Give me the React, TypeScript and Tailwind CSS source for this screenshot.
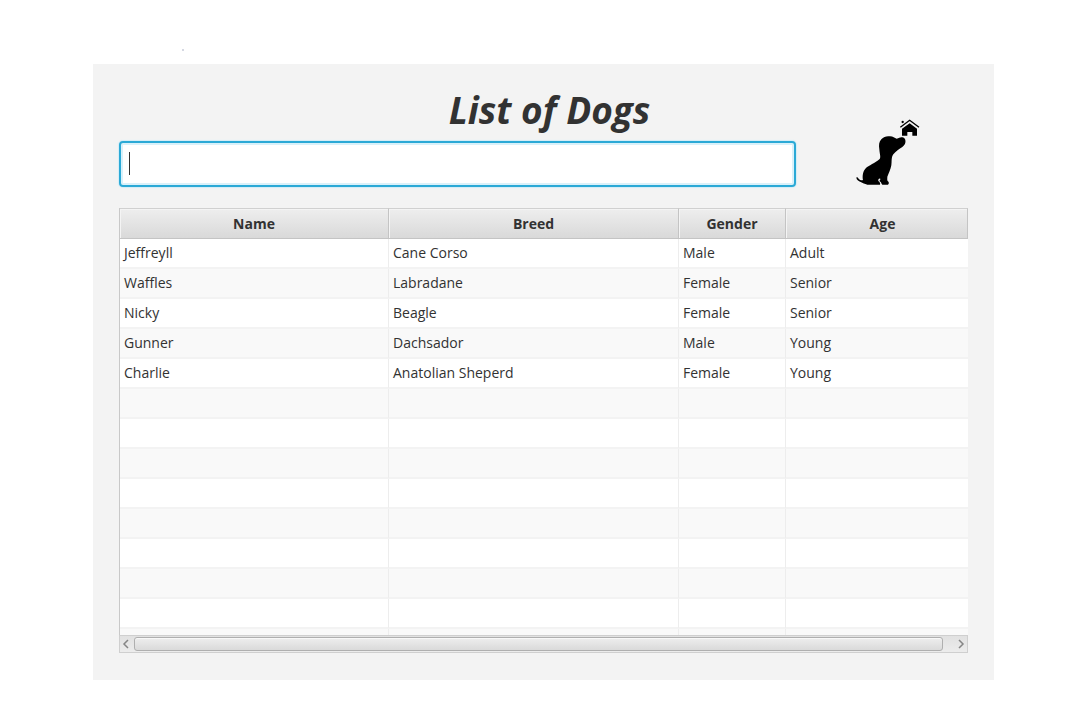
import React from "react";

type Dog = { name: string; breed: string; gender: string; age: string };

const dogs: Dog[] = [
  { name: "Jeffreyll", breed: "Cane Corso", gender: "Male", age: "Adult" },
  { name: "Waffles", breed: "Labradane", gender: "Female", age: "Senior" },
  { name: "Nicky", breed: "Beagle", gender: "Female", age: "Senior" },
  { name: "Gunner", breed: "Dachsador", gender: "Male", age: "Young" },
  { name: "Charlie", breed: "Anatolian Sheperd", gender: "Female", age: "Young" },
];

const columns = ["Name", "Breed", "Gender", "Age"];
const fillerRows = [0, 1, 2, 3, 4, 5, 6, 7];

function DogLogo() {
  return (
    <svg viewBox="30 24 198 207" className="h-[69px] w-[66px] shrink-0" role="img" aria-label="Dog and house">
      {/* dog */}
      <path d="M103 118C101 105 102 95 109 88C116 80 126 77 135 79C144 79 149 85 155 86C161 85 165 82 169 82C174 80 180 84 181 90C183 99 179 106 172 111C163 117 152 124 145 133C138 143 141 155 139 166C137 178 131 190 127 200C127 205 126 210 128 213C132 215 133 221 129 224L112 224C109 221 109 217 106 215C102 214 104 209 107 207C103 203 99 207 100 213C104 216 107 220 105 224L67 224C59 222 53 219 47 216C40 213 35 209 34 203C36 200 39 203 41 206C45 210 50 212 54 210C52 199 53 185 61 176C72 165 90 160 104 147C108 142 104 132 103 118Z" />
      {/* house */}
      <path d="M166 52L194 31L222 52" fill="none" stroke="#000" strokeWidth="4" />
      <path d="M171 56L194 40L216 56L216 77L202 77L202 66L187 66L187 77L171 77Z" />
      <circle cx="173" cy="36" r="3.5" />
    </svg>
  );
}

function Arrow({ d }: { d: string }) {
  return (
    <svg viewBox="0 0 8 10" className="h-[10px] w-2" fill="none" stroke="#858585" strokeWidth="1.5" aria-hidden="true">
      <path d={d} />
    </svg>
  );
}

function ScrollBar() {
  return (
    <div className="flex h-[18px] items-center border border-[#cfcfcf] bg-linear-to-b from-[#e1e1e1] to-[#ececec]">
      <button type="button" aria-label="Scroll left" className="flex w-[14px] shrink-0 items-center justify-start pl-[2px]">
        <Arrow d="M6 1L2 5L6 9" />
      </button>
      <div className="mr-[10px] h-[14px] flex-1 rounded-[3px] border border-[#afafaf] bg-linear-to-b from-[#eeeeee] to-[#dadada] shadow-[inset_0_1px_0_#f8f8f8]" />
      <button type="button" aria-label="Scroll right" className="flex w-[14px] shrink-0 items-center justify-end pr-[2px]">
        <Arrow d="M2 1L6 5L2 9" />
      </button>
    </div>
  );
}

function DogTable() {
  return (
    <table className="w-full table-fixed border-separate border-spacing-0 border-l border-[#c8c8c8] bg-white text-left text-sm">
      <colgroup>
        <col className="w-[269px]" />
        <col className="w-[290px]" />
        <col className="w-[107px]" />
        <col />
      </colgroup>
      <thead>
        <tr>
          {columns.map((label) => (
            <th
              key={label}
              scope="col"
              className="h-[31px] border-y border-r border-[#c4c4c4] border-t-[#d0d0d0] bg-linear-to-b from-[#eeeeee] to-[#d9d9d9] p-0 text-center font-bold shadow-[inset_1px_1px_0_#f4f4f4] last:pl-3"
            >
              {label}
            </th>
          ))}
        </tr>
      </thead>
      <tbody>
        {dogs.map((dog) => (
          <tr key={dog.name} className="even:bg-[#f9f9f9]">
            {[dog.name, dog.breed, dog.gender, dog.age].map((value, i) => (
              <td key={i} className="h-[30px] border-r border-b-2 border-r-[#ededed] border-b-[#f3f3f3] py-0 pr-0 pl-1 last:border-r-0">
                {value}
              </td>
            ))}
          </tr>
        ))}
        {fillerRows.map((row) => (
          <tr key={row} className="odd:bg-white even:bg-[#f9f9f9]">
            {columns.map((label) => (
              <td key={label} className="h-[30px] border-r border-b-2 border-r-[#ededed] border-b-[#f3f3f3] p-0 last:border-r-0" />
            ))}
          </tr>
        ))}
        <tr className="bg-[#f9f9f9]">
          {columns.map((label) => (
            <td key={label} className="h-[6px] border-r border-[#ededed] p-0 last:border-r-0" />
          ))}
        </tr>
      </tbody>
    </table>
  );
}

export default function App() {
  return (
    <div className="relative min-h-screen bg-white px-[93px] py-16 font-['Open_Sans','Noto_Sans',sans-serif] text-[#323232]">
      <span className="absolute top-[49px] left-[182px] size-[2px] bg-[#d5d8e2]" />
      <main className="bg-[#f3f3f3] px-[26px] pt-6 pb-[27px]">
        <h1 className="pl-3 text-center text-[37px] leading-[44px] font-bold italic">List of Dogs</h1>
        <div className="-mt-[14px] flex items-end justify-between">
          <div className="relative mr-[59px] flex-1">
            <input
              type="text"
              aria-label="Search dogs"
              className="block h-[46px] w-full rounded-[4px] border-2 border-[#2ba9d6] bg-white px-2 text-lg caret-transparent shadow-[inset_0_0_0_2px_#d9f1fa,0_0_1px_1px_#d3edf7] outline-none"
            />
            <span className="absolute top-[11px] left-[10px] h-[23px] w-px bg-[#323232]" />
          </div>
          <div className="mr-[47px]">
            <DogLogo />
          </div>
        </div>
        <section className="mt-[21px]" aria-label="Dogs">
          <DogTable />
          <ScrollBar />
        </section>
      </main>
    </div>
  );
}
